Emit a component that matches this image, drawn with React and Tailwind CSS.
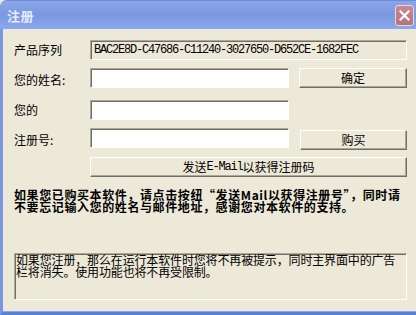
export default function App() {
  const cjk = { fontFamily: '"Noto Sans CJK SC", "Noto Sans", sans-serif' };
  const mono = 'font-["Liberation_Mono",monospace] tracking-[-1.2px]';
  const sunken =
    'border border-t-[#aca899] border-l-[#aca899] border-b-white border-r-white shadow-[inset_1px_1px_0_#716f64]';
  const raised =
    'border border-t-white border-l-white border-b-[#716f64] border-r-[#716f64] shadow-[inset_-1px_-1px_0_#aca899] bg-[#ece9d8] flex items-center justify-center text-[12px] text-black';

  return (
    <div className="w-[416px] h-[315px] overflow-hidden flex flex-col bg-[#ece9d8] text-[12px] text-black" style={cjk}>
      <div className="h-[29px] shrink-0 rounded-tl-[7px] bg-gradient-to-b from-[#8aa6ec] via-[#7b98e0] to-[#8ba8ee] border-t border-[#6f8ad8] flex items-center pl-[7px] pr-[2px]">
        <span className="text-[13px] font-bold text-[#e4ecfb] leading-none tracking-[0.5px]">注册</span>
        <div className="ml-auto w-[19px] h-[21px] rounded-[3px] border border-[#e8d8dc] bg-gradient-to-b from-[#c98a95] to-[#b8717c] flex items-center justify-center">
          <svg width="11" height="11" viewBox="0 0 11 11">
            <path d="M1.5 1.5 L9.5 9.5 M9.5 1.5 L1.5 9.5" stroke="white" strokeWidth="2.2" strokeLinecap="square" />
          </svg>
        </div>
      </div>

      <div className="flex-1 border-l-[3px] border-l-[#7b96de] border-b-[3px] border-b-[#5d7fdc] shadow-[inset_0_-1px_0_#8ea8ee] pl-[11px] pr-[9px] pt-[11px] flex flex-col">
        <div className="flex items-center h-[20px]">
          <span className="w-[76px] shrink-0">产品序列</span>
          <div className={`flex-1 h-[20px] ${sunken} flex items-center pl-[3px]`}>
            <span className={mono}>BAC2E8D-C47686-C11240-3027650-D652CE-1682FEC</span>
          </div>
        </div>

        <div className="flex items-center h-[20px] mt-[8px]">
          <span className="w-[76px] shrink-0 pt-[3px]">您的姓名:</span>
          <div className={`w-[199px] h-[20px] bg-white ${sunken}`} />
          <button className={`ml-[10px] flex-1 h-[20px] ${raised}`}>确定</button>
        </div>

        <div className="flex items-center h-[20px] mt-[12px]">
          <span className="w-[76px] shrink-0">您的</span>
          <div className={`w-[199px] h-[20px] bg-white ${sunken}`} />
        </div>

        <div className="flex items-start h-[22px] mt-[8px]">
          <span className="w-[76px] shrink-0 pt-[3px]">注册号:</span>
          <div className={`w-[199px] h-[20px] bg-white ${sunken}`} />
          <button className={`ml-[11px] mt-[2px] flex-1 h-[20px] ${raised}`}>购买</button>
        </div>

        <div className="flex mt-[7px]">
          <div className="w-[76px] shrink-0" />
          <button className={`flex-1 h-[20px] ${raised}`}>
            发送<span className={mono}>E-Mail</span>以获得注册码
          </button>
        </div>

        <div className="mt-[12px] font-bold tracking-[0.6px] -mr-[2px] whitespace-nowrap leading-[12px]">
          <div>如果您已购买本软件，请点击按纽“发送Mail以获得注册号”，同时请</div>
          <div>不要忘记输入您的姓名与邮件地址，感谢您对本软件的支持。</div>
        </div>

        <div className={`mt-[40px] h-[47px] ${sunken} border-l-[#716f64] shadow-[inset_1px_1px_0_#716f64] pl-[1px] leading-[12px] tracking-[-0.15px]`}>
          如果您注册，那么在运行本软件时您将不再被提示，同时主界面中的广告栏将消失。使用功能也将不再受限制。
        </div>
      </div>
    </div>
  );
}
